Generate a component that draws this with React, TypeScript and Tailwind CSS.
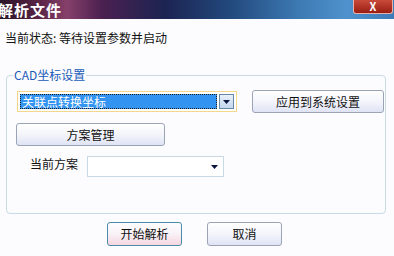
import React from "react";

const font = { fontFamily: '"Noto Sans CJK SC", "Noto Sans", sans-serif' };

function Arrow() {
  return (
    <svg width="7" height="4" viewBox="0 0 7 4">
      <path d="M0 0 H7 L3.5 4 Z" fill="#0a1440" />
    </svg>
  );
}

function Btn({
  children,
  className = "",
  tone = "normal",
}: {
  children: React.ReactNode;
  className?: string;
  tone?: "normal" | "default";
}) {
  const toneCls =
    tone === "default"
      ? "border-[#4a8aaa] bg-gradient-to-b from-[#fdfdff] via-[#f8f2f6] to-[#f6d6e0]"
      : "border-[#9aa4b4] bg-gradient-to-b from-[#ffffff] via-[#f4f5fb] to-[#dfe3f4]";
  return (
    <div
      className={`flex items-center justify-center rounded-[3px] border text-[12px] text-[#111] ${toneCls} ${className}`}
    >
      {children}
    </div>
  );
}

export default function App() {
  return (
    <div className="w-[394px] h-[256px] overflow-hidden bg-[#fcfcfe] relative" style={font}>
      {/* title bar */}
      <div className="h-[19px] w-full bg-[linear-gradient(90deg,#2a1428_0%,#5a2446_10%,#86406a_17%,#4a2050_26%,#1c2452_42%,#22487c_58%,#3d7ab4_76%,#4f92cc_88%,#3c7ab8_100%)] flex items-center relative">
        <span className="text-white font-bold text-[15px] leading-none ml-[-2px] tracking-[1px]">解析文件</span>
        <div className="absolute right-[1px] top-0 w-[40px] h-[14px] bg-gradient-to-b from-[#c84a3a] to-[#9a1c10] border border-[#e8b0a8] border-t-0 rounded-b-[3px] flex items-center justify-center">
          <span className="text-white font-bold text-[11px] leading-none">X</span>
        </div>
      </div>

      <div className="px-[5px] pt-[12px] text-[12px] leading-[14px] text-[#111]">当前状态: 等待设置参数并启动</div>

      {/* group box */}
      <div className="relative mx-[6px] mt-[30px] h-[139px] w-[380px] rounded-[4px] border border-[#c8dae4]">
        <span className="absolute left-[6px] top-[-8px] bg-[#fcfcfe] px-[1px] text-[12px] leading-[14px] text-[#1a5ab8]">
          CAD坐标设置
        </span>

        <div className="flex items-start pt-[15px] pl-[10px]">
          <div className="flex h-[21px] w-[220px] items-center border border-[#f4d68c] bg-white p-[2px]">
            <div className="flex h-full flex-1 items-center border border-dotted border-[#222] bg-[#3393f0] pl-[1px] text-[12px] leading-none text-white">
              关联点转换坐标
            </div>
            <div className="ml-[2px] flex h-[15px] w-[15px] items-center justify-center border border-[#6a88a8] bg-gradient-to-b from-[#e8f0fa] to-[#c4d6ee]">
              <Arrow />
            </div>
          </div>
          <Btn className="ml-[15px] mt-[-1px] h-[23px] w-[132px]">应用到系统设置</Btn>
        </div>

        <Btn className="ml-[9px] mt-[10px] h-[23px] w-[149px]">方案管理</Btn>

        <div className="flex items-center pl-[23px] mt-[10px]">
          <span className="text-[12px] leading-none text-[#111] mt-[-6px]">当前方案</span>
          <div className="ml-[9px] flex h-[21px] w-[137px] items-center justify-end border border-[#c8d8e4] bg-white pr-[5px]">
            <Arrow />
          </div>
        </div>
      </div>

      <div className="flex pl-[107px] pt-[8px] gap-[25px]">
        <Btn tone="default" className="h-[24px] w-[75px]">开始解析</Btn>
        <Btn className="h-[24px] w-[75px]">取消</Btn>
      </div>
    </div>
  );
}
